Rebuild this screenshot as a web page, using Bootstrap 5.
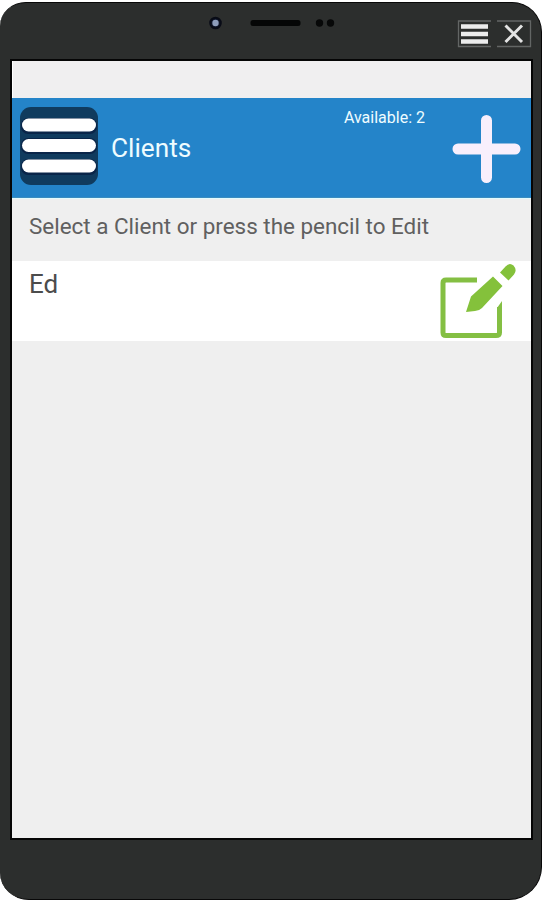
<!DOCTYPE html>
<html lang="en">
<head>
<meta charset="utf-8">
<meta name="viewport" content="width=device-width, initial-scale=1">
<title>Clients</title>
<link href="https://cdn.jsdelivr.net/npm/bootstrap@5.3.0/dist/css/bootstrap.min.css" rel="stylesheet">
<style>
body{background:#fff;font-family:Roboto,sans-serif;height:900px;overflow:hidden}
.device{width:542px;height:898px;margin-top:2px;background:#2c2e2d;border:1px solid #080808;border-width:1px 1px 1px 0;border-radius:26px 30px 33px 29px/24px 30px 33px 27px;padding:0 10px 0 10px}
.bezel{height:56px}
.bezel svg{display:block}
.camera{margin:10px 0 0 195px}
.window-tools{margin:16px -1px 0 0}
.screen{width:523px;height:781px;border:2px solid #050505;background:#efefef}
.status-strip{height:37px;background:#f0eff0;border-left:1px solid #fff}
.app-bar{height:100px;background:#2484c9;color:#eefcff;border-bottom:1px solid #3b8cbf}
.menu-btn{width:78px;height:78px;margin:9px 0 0 8px;border-radius:11px;background:#103b5e}
.title{font-size:26.2px;line-height:30px;margin:35px 0 0 13px}
.available{font-size:16px;line-height:20px;margin:10px 26px 0 auto}
.plus{margin:16px 10px 0 0}
.hint{height:63px;border-top:1px solid #e3fbfd;font-size:22.450px;line-height:28px;padding:13px 0 0 17px;color:#606060}
.client{height:80px;background:#fff;color:#4c4c4c;font-size:26px;line-height:30px}
.client-name{padding:8px 0 0 17px}
.edit{margin:1px 14px 0 0}
</style>
<script src="https://cdn.jsdelivr.net/npm/bootstrap@5.3.0/dist/js/bootstrap.bundle.min.js"></script>
</head>
<body>
<div class="device">
  <div class="bezel d-flex justify-content-between align-items-start">
    <svg class="camera" width="134" height="22" viewBox="0 0 134 22">
      <circle cx="10.500" cy="10" r="5.300" fill="#10172b" stroke="#080b16" stroke-width="2"/>
      <circle cx="10.500" cy="10" r="3.200" fill="#8d9dbb"/>
      <rect x="45.500" y="7" width="50" height="6" rx="2.500" fill="#050606"/>
      <circle cx="114.500" cy="10" r="3.700" fill="#070808"/>
      <circle cx="125.500" cy="10" r="3.700" fill="#070808"/>
    </svg>
    <svg class="window-tools" width="75" height="30" viewBox="0 0 75 30" fill="none">
      <path d="M34 2H1.500V27.500H34M40 2H73.500V27.500H40" stroke="#636665" stroke-width="1.300"/>
      <path d="M4 7.500H31M4 15H31M4 22.500H31" stroke="#ececec" stroke-width="4.500"/>
      <path d="M48.500 6.500L65 23M65 6.500L48.500 23" stroke="#e4e4e4" stroke-width="3"/>
    </svg>
  </div>
  <main class="screen">
    <div class="status-strip"></div>
    <header class="app-bar d-flex align-items-start">
      <button class="menu-btn btn p-0 border-0" aria-label="Menu">
        <svg class="d-block" width="78" height="78" viewBox="0 0 78 78">
          <g fill="#0a2549"><rect x="1" y="11" width="76" height="16" rx="7"/><rect x="1" y="31" width="76" height="16" rx="7"/><rect x="1" y="52" width="76" height="16" rx="7"/></g>
          <g fill="#fff"><rect x="2" y="11.500" width="74" height="13" rx="6.500"/><rect x="2" y="32" width="74" height="13" rx="6.500"/><rect x="2" y="52.500" width="74" height="13" rx="6.500"/></g>
        </svg>
      </button>
      <h1 class="title fw-normal">Clients</h1>
      <span class="available">Available: 2</span>
      <svg class="plus" width="70" height="70" viewBox="0 0 70 70"><path d="M7 35H64M35.500 6.500V63.500" stroke="#f8effc" stroke-width="11" stroke-linecap="round"/></svg>
    </header>
    <div class="hint">Select a Client or press the pencil to Edit</div>
    <div class="client d-flex justify-content-between align-items-start">
      <span class="client-name">Ed</span>
      <svg class="edit" width="78" height="79" viewBox="0 0 78 79">
        <path d="M38 18H7Q4 18 4 21V70.500Q4 73.500 7 73.500H57Q60.500 73.500 60.500 70.500V45" fill="none" stroke="#84bf43" stroke-width="5"/>
        <path d="M58 46L63 39V47H58Z" fill="#84bf43"/>
        <path d="M27 50L32 34.500L54 14.500L63.500 24L43 46Q40 49 36 49Z" fill="#84c13b"/>
        <path d="M61 10.500L66.500 4.500Q70.500 0 74.500 3.500Q78.500 8 75 12.500L69.500 18.500Z" fill="#84c13b"/>
      </svg>
    </div>
  </main>
</div>
</body>
</html>
